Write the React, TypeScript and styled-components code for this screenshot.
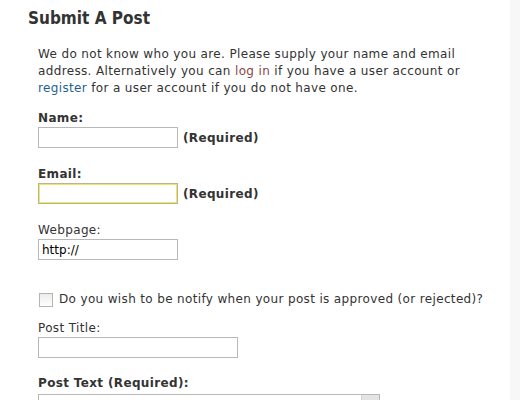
import React from "react";
import styled, { createGlobalStyle } from "styled-components";

const Global = createGlobalStyle`
  html, body { margin: 0; padding: 0; background: #ffffff; }
  body { font-family: "DejaVu Sans", Verdana, sans-serif; color: #333333; }
`;

const Page = styled.div`
  display: flex;
  width: 520px;
  height: 400px;
  overflow: hidden;
`;

const Main = styled.div`
  flex: 1;
  padding: 8px 0 0 28px;
`;

const SideStrip = styled.div`
  width: 10px;
  background: #f7f7f7;
`;

const Title = styled.h2`
  margin: 0;
  font-family: "DejaVu Sans Condensed", "DejaVu Sans", Verdana, sans-serif;
  font-size: 17px;
  font-weight: bold;
  line-height: 20px;
  color: #333333;
`;

const Form = styled.div`
  padding: 18px 0 0 10px;
  font-size: 12px;
  letter-spacing: 0.35px;
`;

const Intro = styled.p`
  margin: 0 0 14px 0;
  line-height: 17px;
  white-space: nowrap;
`;

const Link = styled.a<{ $tone: "red" | "blue" }>`
  color: ${(p) => (p.$tone === "red" ? "#8e4444" : "#1f5f93")};
  text-decoration: none;
`;

const Field = styled.div<{ $gap?: number }>`
  margin-bottom: ${(p) => p.$gap ?? 19}px;
`;

const Label = styled.div<{ $bold?: boolean; $space?: number }>`
  font-weight: ${(p) => (p.$bold ? "bold" : "normal")};
  line-height: 15px;
  margin-bottom: ${(p) => p.$space ?? 1}px;
`;

const Row = styled.div`
  display: flex;
  align-items: center;
  gap: 5px;
`;

const Input = styled.input<{ $w: number; $focus?: boolean }>`
  display: block;
  box-sizing: border-box;
  width: ${(p) => p.$w}px;
  height: 21px;
  margin: 0;
  padding: 1px 3px;
  border: 1px solid ${(p) => (p.$focus ? "#b5b59a" : "#b8b8b8")};
  box-shadow: ${(p) => (p.$focus ? "inset 0 0 0 1px #f2e45c" : "none")};
  font-family: "DejaVu Sans", Verdana, sans-serif;
  font-size: 12px;
  color: #000;
  outline: none;
  background: #fff;
`;

const Req = styled.span`
  font-weight: bold;
`;

const CheckRow = styled.label`
  display: flex;
  align-items: center;
  gap: 6px;
  margin: 32px 0 14px 0;
  line-height: 15px;
`;

const Box = styled.span`
  display: inline-block;
  box-sizing: border-box;
  width: 14px;
  height: 14px;
  margin-left: 1px;
  border: 1px solid #b4b4b4;
  background: linear-gradient(#ececec, #ffffff);
`;

const TextArea = styled.div`
  position: relative;
  box-sizing: border-box;
  width: 342px;
  height: 40px;
  border: 1px solid #b8b8b8;
`;

const Scroll = styled.div`
  position: absolute;
  top: 0;
  right: 0;
  width: 17px;
  height: 100%;
  background: #e4e4e4;
  border-left: 1px solid #d4d4d4;
`;

export default function App() {
  return (
    <Page>
      <Global />
      <Main>
        <Title>Submit A Post</Title>
        <Form>
          <Intro>
            We do not know who you are. Please supply your name and email
            <br />
            address. Alternatively you can <Link $tone="red">log in</Link> if
            you have a user account or
            <br />
            <Link $tone="blue">register</Link> for a user account if you do not
            have one.
          </Intro>
          <Field>
            <Label $bold>Name:</Label>
            <Row>
              <Input $w={140} />
              <Req>(Required)</Req>
            </Row>
          </Field>
          <Field>
            <Label $bold>Email:</Label>
            <Row>
              <Input $w={140} $focus />
              <Req>(Required)</Req>
            </Row>
          </Field>
          <Field $gap={0}>
            <Label>Webpage:</Label>
            <Input $w={140} defaultValue="http://" />
          </Field>
          <CheckRow>
            <Box />
            Do you wish to be notify when your post is approved (or rejected)?
          </CheckRow>
          <Field $gap={18}>
            <Label>Post Title:</Label>
            <Input $w={200} />
          </Field>
          <Field>
            <Label $bold $space={3}>
              Post Text (Required):
            </Label>
            <TextArea>
              <Scroll />
            </TextArea>
          </Field>
        </Form>
      </Main>
      <SideStrip />
    </Page>
  );
}
